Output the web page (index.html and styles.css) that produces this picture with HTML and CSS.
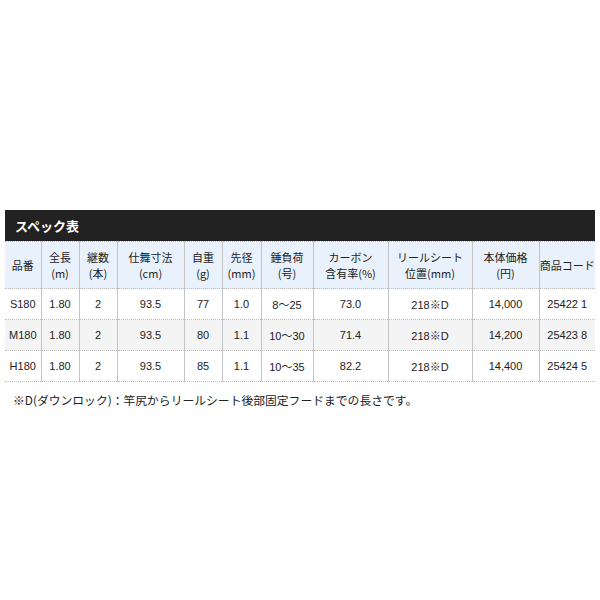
FILE: index.html
```html
<!DOCTYPE html>
<html lang="ja">
<head>
<meta charset="utf-8">
<link rel="stylesheet" href="styles.css">
</head>
<body>
<div class="wrap">
  <div class="title">スペック表</div>
  <table class="spec">
    <colgroup>
      <col style="width:36px"><col style="width:38px"><col style="width:38px"><col style="width:67px"><col style="width:38px"><col style="width:39px"><col style="width:52px"><col style="width:75px"><col style="width:84px"><col style="width:67px"><col style="width:56px">
    </colgroup>
    <thead>
      <tr>
        <th>品番</th>
        <th>全長<br>(m)</th>
        <th>継数<br>(本)</th>
        <th>仕舞寸法<br>(cm)</th>
        <th>自重<br>(g)</th>
        <th>先径<br>(mm)</th>
        <th>錘負荷<br>(号)</th>
        <th>カーボン<br>含有率(%)</th>
        <th>リールシート<br>位置(mm)</th>
        <th>本体価格<br>(円)</th>
        <th>商品コード</th>
      </tr>
    </thead>
    <tbody>
      <tr>
        <td>S180</td><td>1.80</td><td>2</td><td>93.5</td><td>77</td><td>1.0</td><td>8～25</td><td>73.0</td><td>218※D</td><td>14,000</td><td>25422 1</td>
      </tr>
      <tr class="alt">
        <td>M180</td><td>1.80</td><td>2</td><td>93.5</td><td>80</td><td>1.1</td><td>10～30</td><td>71.4</td><td>218※D</td><td>14,200</td><td>25423 8</td>
      </tr>
      <tr>
        <td>H180</td><td>1.80</td><td>2</td><td>93.5</td><td>85</td><td>1.1</td><td>10～35</td><td>82.2</td><td>218※D</td><td>14,400</td><td>25424 5</td>
      </tr>
    </tbody>
  </table>
  <p class="note">※D(ダウンロック)：竿尻からリールシート後部固定フードまでの長さです。</p>
</div>
</body>
</html>
```
FILE: styles.css
```css
html, body {
  margin: 0;
  padding: 0;
  background: #fff;
}
body {
  font-family: "Liberation Sans", "Noto Sans CJK JP", sans-serif;
  color: #222;
}
.wrap {
  width: 590px;
  margin-left: 5px;
  padding-top: 210px;
}
.title {
  background: #222;
  color: #fff;
  font-weight: bold;
  font-size: 13px;
  height: 31px;
  line-height: 31px;
  padding-left: 10px;
  font-family: "Noto Sans CJK JP", sans-serif;
}
.spec {
  width: 590px;
  border-collapse: collapse;
  table-layout: fixed;
  font-size: 11px;
}
.spec th, .spec td {
  text-align: center;
  border-left: 1px solid #c4c4c4;
  border-top: 1px dotted #bdbdbd;
  border-bottom: 1px dotted #bdbdbd;
  padding: 0;
}
.spec th:first-child, .spec td:first-child {
  border-left: none;
}
.spec th {
  background: #e9f1fc;
  font-weight: normal;
  height: 46px;
  line-height: 16px;
  font-family: "Noto Sans CJK JP", sans-serif;
  font-size: 11px;
}
.spec td {
  height: 30px;
  background: #fff;
}
.spec tr.alt td {
  background: #f4f4f4;
}
.note {
  margin: 9px 0 0 8px;
  font-size: 11.8px;
  font-family: "Noto Sans CJK JP", sans-serif;
  color: #222;
}
```
